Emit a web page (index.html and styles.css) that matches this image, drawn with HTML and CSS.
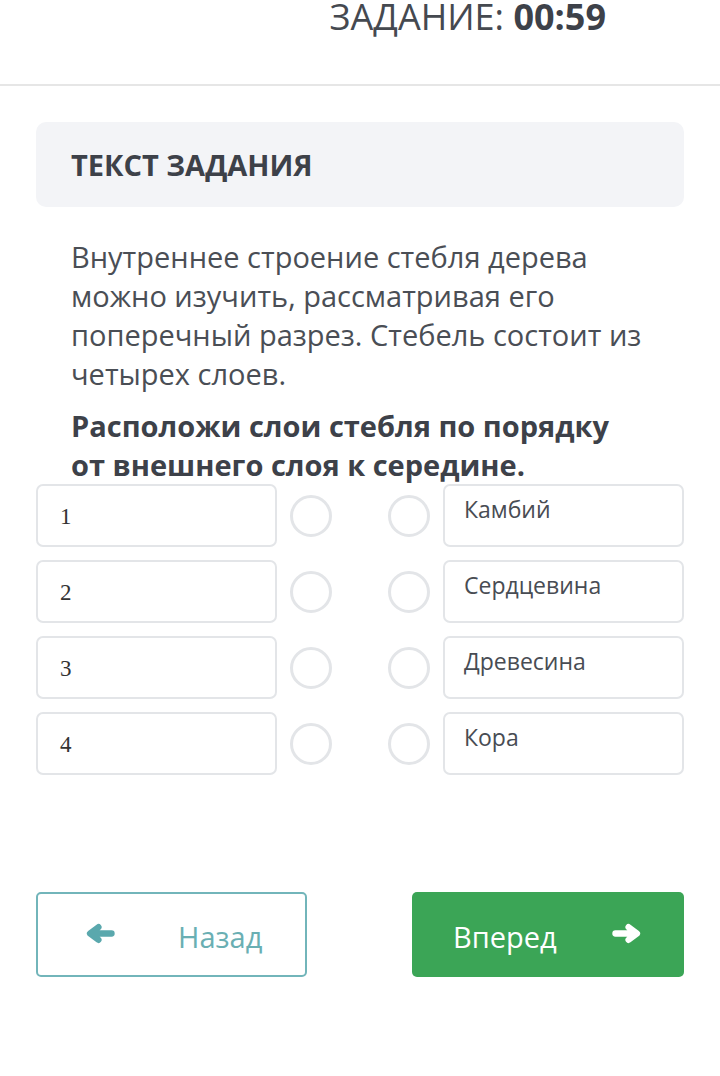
FILE: index.html
```html
<!DOCTYPE html>
<html lang="ru">
<head>
<meta charset="utf-8">
<link rel="stylesheet" href="styles.css">
</head>
<body>
<header class="topbar">
  <div class="timer">ЗАДАНИЕ: <b>00:59</b></div>
</header>
<main class="content">
  <div class="task-head">ТЕКСТ ЗАДАНИЯ</div>
  <p class="task-text">Внутреннее строение стебля дерева можно изучить, рассматривая его поперечный разрез. Стебель состоит из четырех слоев.</p>
  <p class="task-bold">Расположи слои стебля по порядку<br>от внешнего слоя к середине.</p>
  <div class="match">
    <div class="slot">1</div><span class="dot"></span><span></span><span class="dot"></span><div class="item">Камбий</div>
    <div class="slot">2</div><span class="dot"></span><span></span><span class="dot"></span><div class="item">Сердцевина</div>
    <div class="slot">3</div><span class="dot"></span><span></span><span class="dot"></span><div class="item">Древесина</div>
    <div class="slot">4</div><span class="dot"></span><span></span><span class="dot"></span><div class="item">Кора</div>
  </div>
  <div class="nav">
    <button class="btn btn-back">
      <svg class="arr" viewBox="0 0 28 20"><path d="M25 10H6M12.5 4L4.5 10l8 6"/></svg>
      <span>Назад</span>
    </button>
    <button class="btn btn-next">
      <span>Вперед</span>
      <svg class="arr" viewBox="0 0 28 20"><path d="M3 10h19M15.5 4L23.5 10l-8 6"/></svg>
    </button>
  </div>
</main>
</body>
</html>
```
FILE: styles.css
```css
* { box-sizing: border-box; }
html, body { margin: 0; padding: 0; background: #fff; }
body { font-family: "Open Sans", "Noto Sans", sans-serif; color: #464a51; }

.topbar {
  height: 86px;
  border-bottom: 2px solid #e6e6e6;
  display: flex;
  justify-content: flex-end;
  padding-right: 114px;
}
.timer {
  font-size: 36px;
  line-height: 38px;
  margin-top: -2px;
  color: #454950;
  white-space: nowrap;
}
.timer b { font-weight: 700; color: #3d4149; }

.content { padding: 36px 36px 0; }

.task-head {
  height: 85px;
  background: #f3f4f7;
  border-radius: 10px;
  padding-left: 35px;
  display: flex;
  align-items: center;
  font-size: 29px;
  font-weight: 700;
  color: #3d4149;
}

.task-text {
  margin: 30px 0 0;
  padding: 0 35px;
  font-size: 29px;
  line-height: 39px;
  color: #4a4e55;
}
.task-bold {
  margin: 13px 0 0;
  padding: 0 35px;
  font-size: 29px;
  line-height: 39px;
  font-weight: 700;
  color: #3d4149;
}

.match {
  margin-top: 0;
  display: grid;
  grid-template-columns: 241px 42px 1fr 42px 241px;
  grid-auto-rows: 63px;
  column-gap: 13px;
  row-gap: 13px;
  align-items: center;
}
.slot, .item {
  height: 63px;
  border: 2px solid #e3e5e8;
  border-radius: 7px;
}
.slot {
  display: flex;
  align-items: center;
  padding: 3px 0 0 22px;
  font-family: "Liberation Serif", "DejaVu Serif", serif;
  font-size: 23px;
  color: #333;
}
.item {
  padding: 7px 0 0 19px;
  font-size: 23px;
  color: #484c53;
}
.dot {
  width: 42px;
  height: 42px;
  border: 3px solid #e3e5e8;
  border-radius: 50%;
}

.nav {
  margin-top: 117px;
  display: flex;
  justify-content: space-between;
}
.btn {
  height: 85px;
  border-radius: 5px;
  font-family: "Open Sans", "Noto Sans", sans-serif;
  font-size: 29px;
  display: flex;
  align-items: center;
  cursor: pointer;
}
.btn-back {
  width: 271px;
  background: #fff;
  border: 2px solid #72b5ba;
  color: #6aafb3;
  padding: 0 0 0 47px;
}
.btn-back .arr { stroke: #5aa8ad; margin-right: 63px; }
.btn-next {
  width: 272px;
  background: #3ba556;
  border: none;
  color: #fff;
  padding: 0 0 0 41px;
}
.btn-next .arr { stroke: #fff; margin-left: 55px; }
.arr {
  width: 30px;
  height: 21px;
  fill: none;
  stroke-width: 6;
  stroke-linecap: round;
  stroke-linejoin: round;
  margin-top: -3px;
}
.btn span { margin-top: 3px; }
```
